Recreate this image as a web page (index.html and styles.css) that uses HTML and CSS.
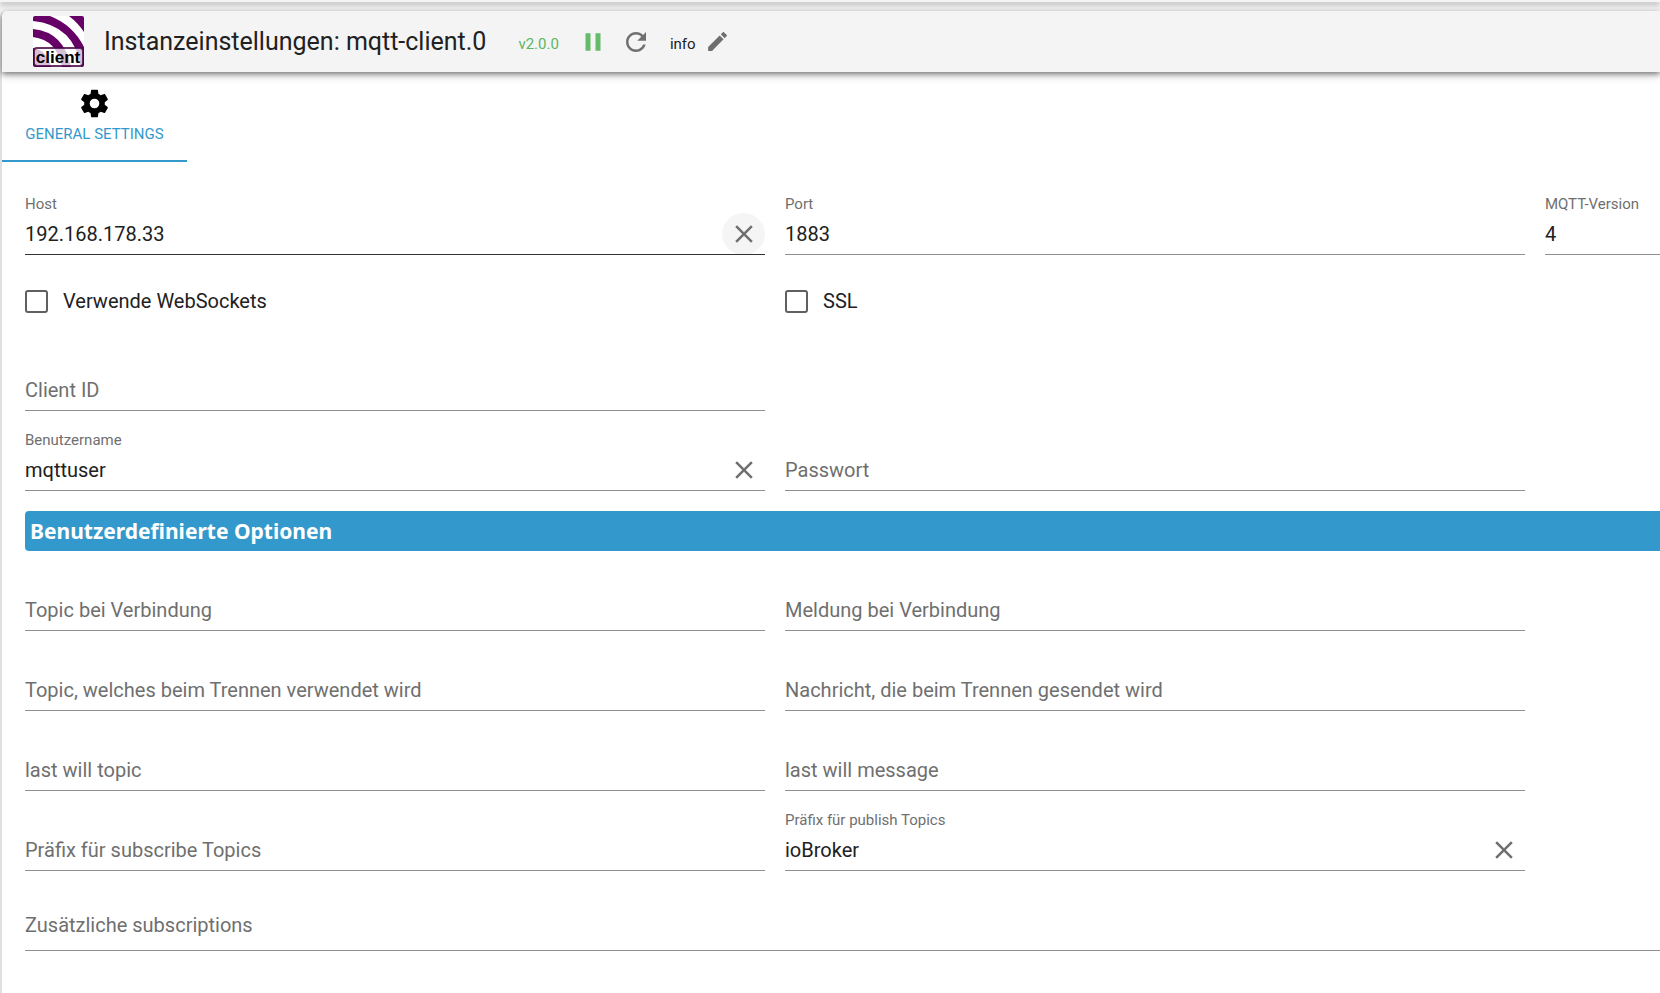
FILE: index.html
```html
<!DOCTYPE html>
<html lang="de">
<head>
<meta charset="utf-8">
<title>Instanzeinstellungen: mqtt-client.0</title>
<link rel="stylesheet" href="styles.css">
</head>
<body>
<div class="topbar"></div>
<main class="panel">
  <header class="toolbar">
    <svg class="logo" viewBox="0 0 51 51" role="img" aria-label="mqtt client">
      <defs><clipPath id="tile"><rect width="51" height="51" rx="2"/></clipPath></defs>
      <g clip-path="url(#tile)">
        <rect width="51" height="51" fill="#fff"/>
        <path d="M36 0H51V16Q45 7 36 0Z" fill="#606"/>
        <path d="M0 0H17Q40 9 51 31V51H48Q41 9 0 5Z" fill="#606"/>
        <path d="M0 13Q31 16 38 51H29Q24 24 0 21Z" fill="#606"/>
        <path d="M0 32Q14 34 18 51H0Z" fill="#606"/>
        <rect x="1" y="32" width="49" height="18" rx="3" fill="#fff" fill-opacity=".75" stroke="#404" stroke-opacity=".8" stroke-width="2"/>
      </g>
      <text class="logo-text" x="25" y="47" text-anchor="middle">client</text>
    </svg>
    <h1 class="title">Instanzeinstellungen: mqtt-client.0</h1>
    <span class="version">v2.0.0</span>
    <button class="icon-button pause" aria-label="Pause"><svg class="icon" viewBox="0 0 24 24"><path d="M6 19h4V5H6v14zm8-14v14h4V5h-4z"/></svg></button>
    <button class="icon-button refresh" aria-label="Neu starten"><svg class="icon" viewBox="0 0 24 24"><path d="M17.65 6.35C16.2 4.9 14.21 4 12 4c-4.42 0-7.99 3.58-7.99 8s3.57 8 7.99 8c3.73 0 6.84-2.55 7.73-6h-2.08c-.82 2.33-3.04 4-5.65 4-3.31 0-6-2.69-6-6s2.69-6 6-6c1.66 0 3.14.69 4.22 1.78L13 11h7V4l-2.35 2.35z"/></svg></button>
    <span class="loglevel">info</span>
    <button class="icon-button edit" aria-label="Bearbeiten"><svg class="icon icon-small" viewBox="0 0 24 24"><path d="M3 17.25V21h3.75L17.81 9.94l-3.75-3.75L3 17.25zM20.71 7.04c.39-.39.39-1.02 0-1.41l-2.34-2.34c-.39-.39-1.02-.39-1.41 0l-1.83 1.83 3.75 3.75 1.83-1.83z"/></svg></button>
  </header>

  <nav class="tabs" role="tablist">
    <button class="tab" role="tab" aria-selected="true">
      <svg class="gear" viewBox="0 0 24 24"><path d="M12,15.5A3.5,3.5 0 0,1 8.5,12A3.5,3.5 0 0,1 12,8.5A3.5,3.5 0 0,1 15.5,12A3.5,3.5 0 0,1 12,15.5M19.43,12.97C19.47,12.65 19.5,12.33 19.5,12C19.5,11.67 19.47,11.34 19.43,11L21.54,9.37C21.73,9.22 21.78,8.95 21.66,8.73L19.66,5.27C19.54,5.05 19.27,4.96 19.05,5.05L16.56,6.05C16.04,5.66 15.5,5.32 14.87,5.07L14.5,2.42C14.46,2.18 14.25,2 14,2H10C9.75,2 9.54,2.18 9.5,2.42L9.13,5.07C8.5,5.32 7.96,5.66 7.44,6.05L4.95,5.05C4.73,4.96 4.46,5.05 4.34,5.27L2.34,8.73C2.21,8.95 2.27,9.22 2.46,9.37L4.57,11C4.53,11.34 4.5,11.67 4.5,12C4.5,12.33 4.53,12.65 4.57,12.97L2.46,14.63C2.27,14.78 2.21,15.05 2.34,15.27L4.34,18.73C4.46,18.95 4.73,19.03 4.95,18.95L7.44,17.94C7.96,18.34 8.5,18.68 9.13,18.93L9.5,21.58C9.54,21.82 9.75,22 10,22H14C14.25,22 14.46,21.82 14.5,21.58L14.87,18.93C15.5,18.67 16.04,18.34 16.56,17.94L19.05,18.95C19.27,19.03 19.54,18.95 19.66,18.73L21.66,15.27C21.78,15.05 21.73,14.78 21.54,14.63L19.43,12.97Z"/></svg>
      <span>GENERAL SETTINGS</span>
    </button>
  </nav>

  <form class="settings">
    <div class="row">
      <div class="field active">
        <label for="host">Host</label>
        <input id="host" type="text" value="192.168.178.33">
        <button type="button" class="clear hover" aria-label="Host leeren"><svg class="icon" viewBox="0 0 24 24"><path d="M19 6.41 17.59 5 12 10.59 6.41 5 5 6.41 10.59 12 5 17.59 6.41 19 12 13.41 17.59 19 19 17.59 13.41 12z"/></svg></button>
      </div>
      <div class="field"><label for="port">Port</label><input id="port" type="text" value="1883"></div>
      <div class="field"><label for="mqttver">MQTT-Version</label><input id="mqttver" type="text" value="4"></div>
    </div>

    <div class="row checks">
      <label class="check"><input type="checkbox"><span>Verwende WebSockets</span></label>
      <label class="check"><input type="checkbox"><span>SSL</span></label>
    </div>

    <div class="row">
      <div class="field empty"><label for="clientid">Client ID</label><input id="clientid" type="text"></div>
    </div>

    <div class="row">
      <div class="field">
        <label for="user">Benutzername</label>
        <input id="user" type="text" value="mqttuser">
        <button type="button" class="clear" aria-label="Benutzername leeren"><svg class="icon" viewBox="0 0 24 24"><path d="M19 6.41 17.59 5 12 10.59 6.41 5 5 6.41 10.59 12 5 17.59 6.41 19 12 13.41 17.59 19 19 17.59 13.41 12z"/></svg></button>
      </div>
      <div class="field empty"><label for="pass">Passwort</label><input id="pass" type="password"></div>
    </div>

    <h2 class="section">Benutzerdefinierte Optionen</h2>

    <div class="row first">
      <div class="field empty"><label for="onc">Topic bei Verbindung</label><input id="onc" type="text"></div>
      <div class="field empty"><label for="oncm">Meldung bei Verbindung</label><input id="oncm" type="text"></div>
    </div>
    <div class="row">
      <div class="field empty"><label for="ond">Topic, welches beim Trennen verwendet wird</label><input id="ond" type="text"></div>
      <div class="field empty"><label for="ondm">Nachricht, die beim Trennen gesendet wird</label><input id="ondm" type="text"></div>
    </div>
    <div class="row">
      <div class="field empty"><label for="lwt">last will topic</label><input id="lwt" type="text"></div>
      <div class="field empty"><label for="lwm">last will message</label><input id="lwm" type="text"></div>
    </div>
    <div class="row">
      <div class="field empty"><label for="insub">Präfix für subscribe Topics</label><input id="insub" type="text"></div>
      <div class="field">
        <label for="outpub">Präfix für publish Topics</label>
        <input id="outpub" type="text" value="ioBroker">
        <button type="button" class="clear" aria-label="Präfix leeren"><svg class="icon" viewBox="0 0 24 24"><path d="M19 6.41 17.59 5 12 10.59 6.41 5 5 6.41 10.59 12 5 17.59 6.41 19 12 13.41 17.59 19 19 17.59 13.41 12z"/></svg></button>
      </div>
    </div>
    <div class="field empty tall"><label for="subs">Zusätzliche subscriptions</label><input id="subs" type="text"></div>
  </form>
</main>
</body>
</html>
```
FILE: styles.css
```css
* {
  box-sizing: border-box;
}

body {
  margin: 0;
  min-height: 100vh;
  display: flex;
  flex-direction: column;
  background: #f4f4f4;
  color: #212121;
  font-family: Roboto, "Liberation Sans", sans-serif;
  font-size: 20px;
  overflow-x: hidden;
}

.topbar {
  height: 2px;
  background: #f4f4f4;
  box-shadow: 0 2px 5px rgba(0, 0, 0, .4), 0 4px 8px rgba(0, 0, 0, .14);
}

.panel {
  flex: 1;
  margin-top: 9px;
  border-left: 2px solid #e0e0e0;
  border-top-left-radius: 6px;
  background: #fff;
}

.toolbar {
  display: flex;
  align-items: center;
  height: 61px;
  padding-left: 31px;
  background: #f4f4f4;
  border-top-left-radius: 5px;
  box-shadow: 0 2px 5px rgba(0, 0, 0, .42), 0 4px 10px rgba(0, 0, 0, .18);
}

.logo {
  width: 51px;
  height: 51px;
}

.logo-text {
  font: bold 17px "Liberation Sans", Arial, sans-serif;
}

.title {
  margin: 0 0 0 20px;
  font-size: 25px;
  font-weight: 400;
  line-height: 40px;
}

.version,
.loglevel {
  padding-top: 4px;
  font-size: 15px;
}

.version {
  margin-left: 32px;
  color: #5cb660;
}

button {
  border: 0;
  padding: 0;
  background: none;
  font-family: inherit;
  color: #6f6f6f;
}

.icon-button {
  display: flex;
}

.pause {
  margin-left: 19px;
  color: #66bb6a;
}

.refresh {
  margin-left: 13px;
}

.loglevel {
  margin-left: 19px;
}

.edit {
  margin-left: 9px;
}

.icon,
.gear {
  display: block;
  width: 30px;
  height: 30px;
  fill: currentColor;
}

.icon-small {
  width: 25px;
  height: 25px;
}

.tabs {
  display: flex;
}

.tab {
  display: flex;
  flex-direction: column;
  align-items: center;
  height: 90px;
  min-width: 185px;
  padding: 15px 20px 0;
  border-bottom: 2px solid #3399cc;
  color: #3399cc;
  font-size: 15px;
  line-height: 20px;
}

.gear {
  width: 33px;
  height: 33px;
  margin-bottom: 4px;
  color: #000;
}

.settings {
  padding: 33px 0 40px 23px;
}

.row {
  display: grid;
  grid-template-columns: 148fr 148fr 23fr;
  column-gap: 20px;
  margin-bottom: 20px;
}

.row.first {
  margin-top: 20px;
}

.field {
  display: grid;
  grid-template-columns: minmax(0, 1fr);
  grid-template-rows: 18px 42px;
}

.field label {
  color: #6f6f6f;
  font-size: 15px;
  line-height: 18px;
  white-space: nowrap;
}

.field input {
  grid-area: 2 / 1;
  width: 100%;
  padding: 0;
  border: 0;
  border-bottom: 1px solid #8f8f8f;
  border-radius: 0;
  outline: 0;
  background: transparent;
  color: #212121;
  font: inherit;
}

.field.active input {
  border-bottom-color: #333;
}

.field.empty label {
  grid-area: 2 / 1;
  font-size: 20px;
  line-height: 42px;
}

.field.tall {
  grid-template-rows: 13px 47px;
}

.clear {
  grid-area: 2 / 1;
  justify-self: end;
  display: grid;
  place-items: center;
  width: 43px;
  border-radius: 50%;
}

.clear.hover {
  background: rgba(0, 0, 0, .04);
}

.checks {
  margin: 25px 0 29px;
}

.check {
  display: flex;
  align-items: center;
  gap: 15px;
  height: 42px;
}

.check input {
  appearance: none;
  width: 23px;
  height: 23px;
  margin: 0;
  border: 2px solid #606060;
  border-radius: 3px;
}

.section {
  margin: 0;
  padding: 0 5px;
  border-radius: 4px 0 0 4px;
  background: #3399cc;
  color: #fff;
  font: bold 21px/40px "Noto Sans", "Open Sans", sans-serif;
}
```
